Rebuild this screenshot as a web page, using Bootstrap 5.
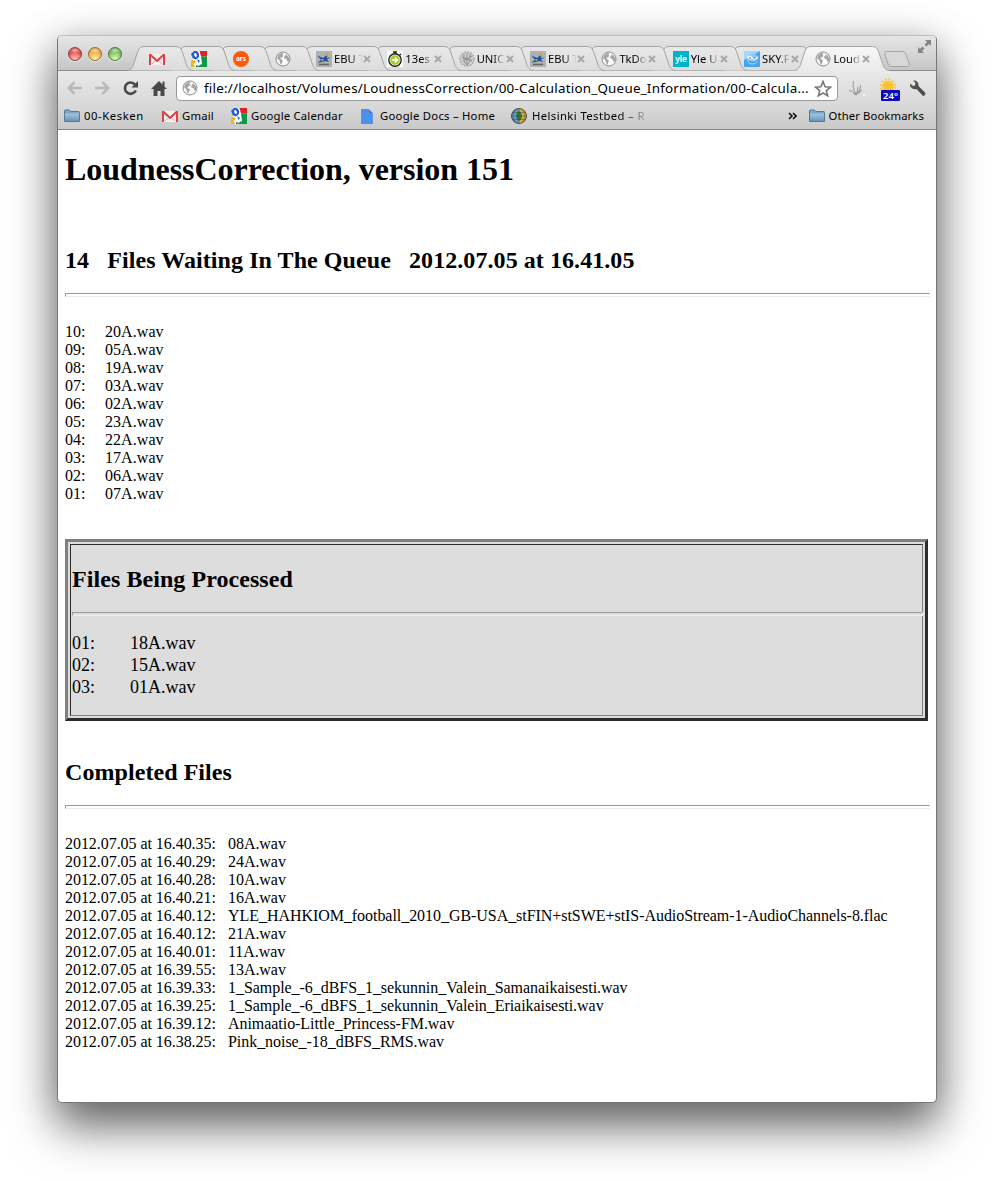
<!DOCTYPE html>
<html lang="en">
<head>
<meta charset="utf-8">
<title>LoudnessCorrection</title>
<link href="https://cdn.jsdelivr.net/npm/bootstrap@5.3.0/dist/css/bootstrap.min.css" rel="stylesheet">
<script src="https://cdn.jsdelivr.net/npm/bootstrap@5.3.0/dist/js/bootstrap.bundle.min.js"></script>
<style>
body{background:#fff;color:#000;min-height:1181px;padding:35px 0 0 57px;font-family:"Noto Sans","Open Sans",sans-serif}
svg{display:block;flex:none}
.browser{width:880px;height:1068px;border-radius:5px;background:#fff;box-shadow:0 25px 46px rgba(0,0,0,.5),0 8px 40px rgba(0,0,0,.26);border:1px solid #777;border-top-color:#bdbdbd;overflow:hidden}
.strip{height:35px;background:linear-gradient(#e6e6e6,#c6c6c6);border-bottom:1px solid #8d8d8d;padding-left:10px}
.light{width:14px;height:14px;border-radius:50%;margin:11px 6px 0 0;border:1px solid #777;box-shadow:0 1px 0 #fff8}
.l-r{background:radial-gradient(ellipse 50% 25% at 50% 18%,#fff9,#fff0),radial-gradient(circle at 50% 90%,#ffc3b8,#e25050 60%,#b02a30);border-color:#8d3a3c}
.l-y{background:radial-gradient(ellipse 50% 25% at 50% 18%,#fff9,#fff0),radial-gradient(circle at 50% 90%,#fff6a0,#eeaa48 60%,#c07820);border-color:#96692c}
.l-g{background:radial-gradient(ellipse 50% 25% at 50% 18%,#fff9,#fff0),radial-gradient(circle at 50% 90%,#dcffb0,#7cbc60 60%,#4c8d35);border-color:#4a7838}
.tabs{margin:10px 0 0 3px;height:25px}
.btab{position:relative;height:25px;margin-right:-16px;flex:none}
.btab>.shape{position:absolute;left:-4px;top:0;overflow:visible}
.btab>.inner{position:relative;height:25px;padding-left:17px}
.pin>.inner{padding-left:18px}
.ttl{font-size:11.2px;width:29px;margin-left:2px;white-space:nowrap;line-height:16px;-webkit-mask-image:linear-gradient(90deg,#000 55%,transparent 98%);mask-image:linear-gradient(90deg,#000 55%,transparent 98%)}
.newtab{margin:15px 0 0 13px}
.full{margin:3px 4px 0 auto}
.tools{height:34px;background:linear-gradient(#e9e9e9,#d9d9d9);padding-left:9px}
.omni{width:662px;height:25px;border:1px solid #999;border-radius:4px;background:#fff;padding:0 5px 0 5px;margin-left:9px}
.url{font-size:13.4px;letter-spacing:.23px;line-height:22px;margin-left:6px;width:606px}
.marks{height:25px;background:linear-gradient(#d9d9d9,#c9c9c9);border-bottom:1px solid #888;font-size:11.3px;letter-spacing:.2px;padding:0 12px 2px 6px;white-space:nowrap}
.marks span{line-height:16px}
.fade-t{background:linear-gradient(90deg,#000 78%,#c9c9c9 105%);-webkit-background-clip:text;background-clip:text;color:transparent}
.deg{position:absolute;left:2px;top:12px;width:19px;height:11px;background:#0a0ac0;color:#fff;font-size:9.500px;line-height:11px;font-weight:600;text-align:center;border-radius:1px}
.doc{font-family:"Liberation Serif",serif;font-size:16px;line-height:18px;padding:0 6px 0 7px}
.doc h1{font-size:32px;font-weight:700;line-height:36px;letter-spacing:-.04px;margin:21px 0 0}
.doc h2{font-size:24px;font-weight:700;line-height:28px;letter-spacing:.065px;margin:0;white-space:pre}
.rule{height:4px;border:1px solid #999;border-right-color:#eee;border-bottom-color:#eee}
.doc ul{white-space:pre}
#queue{letter-spacing:.06px}
#done{letter-spacing:-.05px}
.proc{width:863px;height:182px;background:#ddd;border:3px solid;border-color:#808080 #2c2c2c #2c2c2c #808080;padding:2px}
.cell{height:172px;border:1px solid;border-color:#2c2c2c #808080 #808080 #2c2c2c;font-size:18px;line-height:22px;padding:0 0 0 1px}
.cell .rule{margin-right:-1px}
.k1{width:40px}.k2{width:58px}.k3{width:163px}
</style>
</head>
<body>
<svg width="0" height="0" class="position-absolute">
<defs>
<linearGradient id="tg" x1="0" y1="0" x2="0" y2="1"><stop offset="0" stop-color="#e9e9e9"/><stop offset="1" stop-color="#dcdcdc"/></linearGradient>
<linearGradient id="ta" x1="0" y1="0" x2="0" y2="1"><stop offset="0" stop-color="#f8f8f8"/><stop offset="1" stop-color="#e9e9e9"/></linearGradient>
<linearGradient id="fg" x1="0" y1="0" x2="0" y2="1"><stop offset="0" stop-color="#a5c7e0"/><stop offset="1" stop-color="#6795b8"/></linearGradient>
<symbol id="gmail" viewBox="0 0 16 16"><path fill="#f8eeee" d="M0 3h16v11H0z"/><path d="M3 13 7 9M13 13 9 9" stroke="#e3a5a5"/><path fill="#dc4242" d="M0 3h2L8 8.500 14 3h2v11h-2V5.700l-6 5.500-6-5.500V14H0z"/></symbol>
<symbol id="google" viewBox="0 0 16 16"><path fill="#fff" d="M2 0h9v16H2z"/><path fill="#e22222" d="M8.500 0H16v5.500h-6z"/><path fill="#0a9a48" d="M10 5.500h6V16H9l2-3.500-.5-3z"/><path fill="#f6b21b" d="M0 9.500 3.500 9 5 11l-2.500 2 1.500 3H0z"/><path fill="#1d5ed5" d="M0 3 3 0h3l2 2.500V6L5 8.500 2 7.500z"/><ellipse cx="4.500" cy="4" rx="1.300" ry="2" fill="#fff" transform="rotate(-25 4.500 4)"/><path fill="#1d5ed5" d="m6 8 3 2-1.500 2z"/><path fill="#1b9a50" d="M5 14q3 2 5-1v3H5z"/></symbol>
<symbol id="ars" viewBox="0 0 16 16"><circle cx="8" cy="8" r="8" fill="#ff5a0a"/><text x="8" y="10.200" font-family="Noto Sans,sans-serif" font-size="6.500" font-weight="700" text-anchor="middle" fill="#fff">ars</text></symbol>
<symbol id="globe" viewBox="0 0 16 16"><circle cx="8" cy="8" r="7" fill="#fbfbfb" stroke="#8a8a8a"/><path fill="#a4a4a4" d="M3 4.500 6 2l2.500.5L7.500 4l1 1-2 1.500L5 7l1.500 1.500L8 9.500 7 11.500 6.500 14 5 12 4.500 9.500 2 7zM10 3l3 2 1.500 3-1 3-1.500-1-.5-2-2-.5L9 5.500l1.500-.5z"/></symbol>
<symbol id="ebu" viewBox="0 0 16 16"><path fill="#b0b0b0" d="M0 0h16v16H0z"/><path fill="#1d56a0" d="M1.500 4.500 7 7l5.500-4.500L10.500 7l4-.5-3.500 2 2 2.500-4-1-3.500 1-4 .8L5 9z"/><path fill="#f1c21c" d="m10 5 4.500-4L12 5zM5 8l3 .5L6 10z"/><path d="M3 13.500h10" stroke="#666" stroke-width="1.500"/></symbol>
<symbol id="timer" viewBox="0 0 16 16"><path fill="#fff" d="M0 0h16v16H0z"/><circle cx="8" cy="9" r="6.200" fill="#f5f8d8" stroke="#222" stroke-width="1.400"/><circle cx="8" cy="9" r="4.800" fill="#a8cc28"/><path d="M5 9h5M8 6.500 10.500 9 8 11.500" fill="none" stroke="#fff" stroke-width="1.700"/><path d="M6 1h4M8 1v2M13 3l1 1" stroke="#222" stroke-width="1.600"/></symbol>
<symbol id="uni" viewBox="0 0 16 16"><circle cx="8" cy="8" r="7" fill="#d0d0d0" stroke="#aaa" stroke-width="1.500" stroke-dasharray="2 1"/><path d="M5 3v7l3 4 3-4V3M8 2v12M3 6l10 4M13 5 4 10" fill="none" stroke="#8c8c8c"/></symbol>
<symbol id="yle" viewBox="0 0 16 16"><path fill="#00b4c8" d="M0 0h16v16H0z"/><text x="8" y="10.500" font-family="Noto Sans,sans-serif" font-size="8" font-weight="700" text-anchor="middle" fill="#fff">yle</text></symbol>
<symbol id="sky" viewBox="0 0 16 16"><path fill="#4aa6ec" d="M0 0h16v16H0z"/><path fill="#a5d8f8" d="M0 0h16L0 9z"/><circle cx="8.500" cy="8" r="5.500" fill="#8ccaf4"/><path d="M3 6c2-2 4-1.500 5 0s4 1 6-1c0 3-2 4.500-4 3.500S5 10 3 6z" fill="#eef9ff"/><path d="M5 10c3 2 6 2 8-1M5 7h2M9.500 7h2" stroke="#2870b8" fill="none"/></symbol>
<symbol id="folder" viewBox="0 0 16 16"><path d="M.5 3Q.5 2 1.500 2h4l1.500 1.500h7.500q1 0 1 1v9H.5z" fill="#7ea5c2" stroke="#527a98"/><path d="M1 5.500h14V13H1z" fill="url(#fg)"/></symbol>
<symbol id="page" viewBox="0 0 11 14"><path fill="#4a90ee" d="M0 0h7v4h4v10H0z"/><path fill="#2f6fd0" d="m7 0 4 4H7z"/></symbol>
<symbol id="hel" viewBox="0 0 16 16"><circle cx="8" cy="8" r="7.500" fill="#e0ac38"/><path d="M8 .5a7.500 7.500 0 0 0 0 15z" fill="#6a9ac8"/><path d="M8 3c4 2 4 8 0 10-4-2-4-8 0-10z" fill="#2c8038"/><path d="M.5 8h15M8 .5v15M5 1.500c-4 4-4 9 0 13M11 1.500c4 4 4 9 0 13M2 4.500h12M2 11.500h12" fill="none" stroke="#333" stroke-width=".4"/><circle cx="8" cy="8" r="7.500" fill="none" stroke="#333" stroke-width=".8"/></symbol>
<symbol id="x" viewBox="0 0 8 8"><path d="m1 1 6 6M7 1 1 7" stroke="#a8a8a8" stroke-width="2"/></symbol>
</defs>
</svg>
<main class="browser">
 <div class="strip d-flex align-items-start">
  <i class="light l-r"></i><i class="light l-y"></i><i class="light l-g"></i>
  <div class="tabs d-flex" id="tabs"></div>
  <svg class="newtab" width="28" height="17"><path d="M3.500.5H20q2 0 3 3l3 9q1 3-1.500 3H9q-3 0-4-3L2 4Q1 .5 3.500.5z" fill="#d8d8d8" stroke="#a4a4a4"/></svg>
  <svg class="full" width="15" height="15" viewBox="0 0 15 15"><path fill="#858585" d="M8 1h6v6l-2-2-2.500 2.500-2-2L10 3zM1 14V8l2 2 2.500-2.500 2 2L5 12l2 2z"/></svg>
 </div>
 <div class="tools d-flex align-items-center">
  <svg width="15" height="14" viewBox="0 0 15 14"><path d="M15 7H2M7.500 1.200 1.700 7l5.800 5.800" fill="none" stroke="#b8b8b8" stroke-width="2.500"/></svg>
  <svg width="15" height="14" viewBox="0 0 15 14" style="margin-left:13px"><path d="M0 7h13M7.500 1.200 13.300 7l-5.800 5.800" fill="none" stroke="#b8b8b8" stroke-width="2.500"/></svg>
  <svg width="16" height="16" viewBox="0 0 16 16" style="margin-left:13px"><path d="M12.800 10.500A5.700 5.700 0 1 1 12 4.500" fill="none" stroke="#484848" stroke-width="2.600"/><path d="M15 1v6.500H8.500z" fill="#484848"/></svg>
  <svg width="16" height="16" viewBox="0 0 16 16" style="margin-left:12px"><path fill="#484848" d="M8 1 0 9h2.500v7h4v-5h3v5h4V9H16l-2.500-2.500V1.500h-2v3z"/></svg>
  <div class="omni d-flex align-items-center">
   <svg width="16" height="16"><use href="#globe"/></svg>
   <div class="url text-nowrap" id="url">file://localhost/Volumes/LoudnessCorrection/00-Calculation_Queue_Information/00-Calcula...</div>
   <svg width="18" height="17" viewBox="0 0 18 17" class="ms-auto"><path d="m9 1.500 2.100 5.200 5.400.4-4.200 3.500 1.400 5.200L9 13l-4.700 2.800 1.400-5.200L1.500 7.100l5.400-.4z" fill="#fff" stroke="#777" stroke-width="1.600"/></svg>
  </div>
  <svg width="20" height="20" viewBox="0 0 20 20" style="margin-left:8px"><path d="M9 17C8 15 6 13 3 12.500M10 17C8 12 6 9 7.500 3M10 17c2-3 1-5 2-8M10 17c3-3 5-6 4.500-10M11 16c3-1 3-3 5-4" fill="none" stroke="#a0a0a0" stroke-width="1.200"/><circle cx="18" cy="17.500" r="1" fill="#fff"/></svg>
  <div class="position-relative" style="margin:5px 0 0 13px;width:24px;height:26px">
   <svg width="20" height="20" viewBox="0 0 20 20"><circle cx="9" cy="8.500" r="7" fill="none" stroke="#f5c86a" stroke-width="2.500" stroke-dasharray="2 1.700"/><circle cx="9" cy="8.500" r="5.500" fill="#ffc228"/></svg>
   <span class="deg">24°</span>
  </div>
  <svg width="17" height="17" viewBox="0 0 17 17" style="margin-left:6px"><path fill="#505050" d="M1 3.500 4 6l2-.5L6.500 3 4 .6C7 0 10 2 9.500 6l6.500 6.500q1.500 3-2 3.500L7.500 9C4 10 .5 7.500 1 3.500z"/></svg>
 </div>
 <div class="marks d-flex align-items-center">
  <svg width="16" height="16"><use href="#folder"/></svg><span style="margin-left:4px;width:78px;letter-spacing:.55px">00-Kesken</span>
  <svg width="16" height="16"><use href="#gmail"/></svg><span style="margin-left:4px;width:49px">Gmail</span>
  <svg width="16" height="16"><use href="#google"/></svg><span style="margin-left:4px;width:110px">Google Calendar</span>
  <svg width="12" height="15"><use href="#page"/></svg><span style="margin-left:7px;width:131px;letter-spacing:.25px">Google Docs – Home</span>
  <svg width="16" height="16"><use href="#hel"/></svg><span class="fade-t" style="margin-left:5px;letter-spacing:.4px">Helsinki Testbed – R</span>
  <svg class="ms-auto" width="9" height="8" viewBox="0 0 9 8" style="margin-right:12px"><path d="m1 1 3 3-3 3M5 1l3 3-3 3" fill="none" stroke="#111" stroke-width="1.600"/></svg>
  <svg width="16" height="16"><use href="#folder"/></svg><span style="margin-left:4px;letter-spacing:.1px">Other Bookmarks</span>
 </div>
 <article class="doc">
  <h1>LoudnessCorrection, version 151</h1>
  <h2 style="margin-top:59px">14   Files Waiting In The Queue   2012.07.05 at 16.41.05</h2>
  <div class="rule" style="margin-top:19px"></div>
  <ul class="list-unstyled mb-0" style="margin-top:26px" id="queue"></ul>
  <section class="proc" style="margin-top:36px"><div class="cell">
   <h2 style="padding-top:20px">Files Being Processed</h2>
   <div class="rule" style="margin-top:19px"></div>
   <ul class="list-unstyled mb-0" style="margin-top:16px" id="proc"></ul>
  </div></section>
  <h2 style="margin-top:37px">Completed Files</h2>
  <div class="rule" style="margin-top:19px"></div>
  <ul class="list-unstyled mb-0" style="margin-top:26px" id="done"></ul>
 </article>
</main>
<script>
const tabs=[['gmail'],['google'],['ars'],['globe'],['ebu','EBU T'],['timer','13es'],['uni','UNIC'],['ebu','EBU T'],['globe','TkDo'],['yle','Yle U'],['sky','SKY.F'],['globe','Loud']];
document.getElementById('tabs').innerHTML=tabs.map(([ic,t],i)=>{
 const w=t?87.35:58,on=i===tabs.length-1,r=w+8;
 const d=`M0 24.500C5 24 6 20 7 17L11 5Q12.500 .5 17 .5H${r-17}Q${r-12.500} .5 ${r-11} 5L${r-7} 17C${r-6} 20 ${r-5} 24 ${r} 24.500`;
 return `<div class="btab ${t?'':'pin'}" style="width:${w}px;z-index:${on?30:20-i}"><svg class="shape" width="${r}" height="26"><path d="${d}${on?'V26H0z':''}" fill="url(#${on?'ta':'tg'})"/><path d="${d}" fill="none" stroke="#a4a4a4"/></svg><div class="inner d-flex align-items-center"><svg width="16" height="16"><use href="#${ic}"/></svg>${t?`<span class="ttl">${t}</span><svg width="8" height="8"><use href="#x"/></svg>`:''}</div></div>`}).join('');
const fill=(id,rows,k)=>document.getElementById(id).innerHTML=rows.map(([a,b])=>`<li class="d-flex"><span class="${k}">${a}:</span><span>${b}</span></li>`).join('');
fill('queue',['20A','05A','19A','03A','02A','23A','22A','17A','06A','07A'].map((f,i)=>[String(10-i).padStart(2,'0'),f+'.wav']),'k1');
fill('proc',[['01','18A.wav'],['02','15A.wav'],['03','01A.wav']],'k2');
fill('done',[['40.35','08A.wav'],['40.29','24A.wav'],['40.28','10A.wav'],['40.21','16A.wav'],['40.12','YLE_HAHKIOM_football_2010_GB-USA_stFIN+stSWE+stIS-AudioStream-1-AudioChannels-8.flac'],['40.12','21A.wav'],['40.01','11A.wav'],['39.55','13A.wav'],['39.33','1_Sample_-6_dBFS_1_sekunnin_Valein_Samanaikaisesti.wav'],['39.25','1_Sample_-6_dBFS_1_sekunnin_Valein_Eriaikaisesti.wav'],['39.12','Animaatio-Little_Princess-FM.wav'],['38.25','Pink_noise_-18_dBFS_RMS.wav']].map(([t,f])=>['2012.07.05 at 16.'+t,f]),'k3');
</script>
</body>
</html>
